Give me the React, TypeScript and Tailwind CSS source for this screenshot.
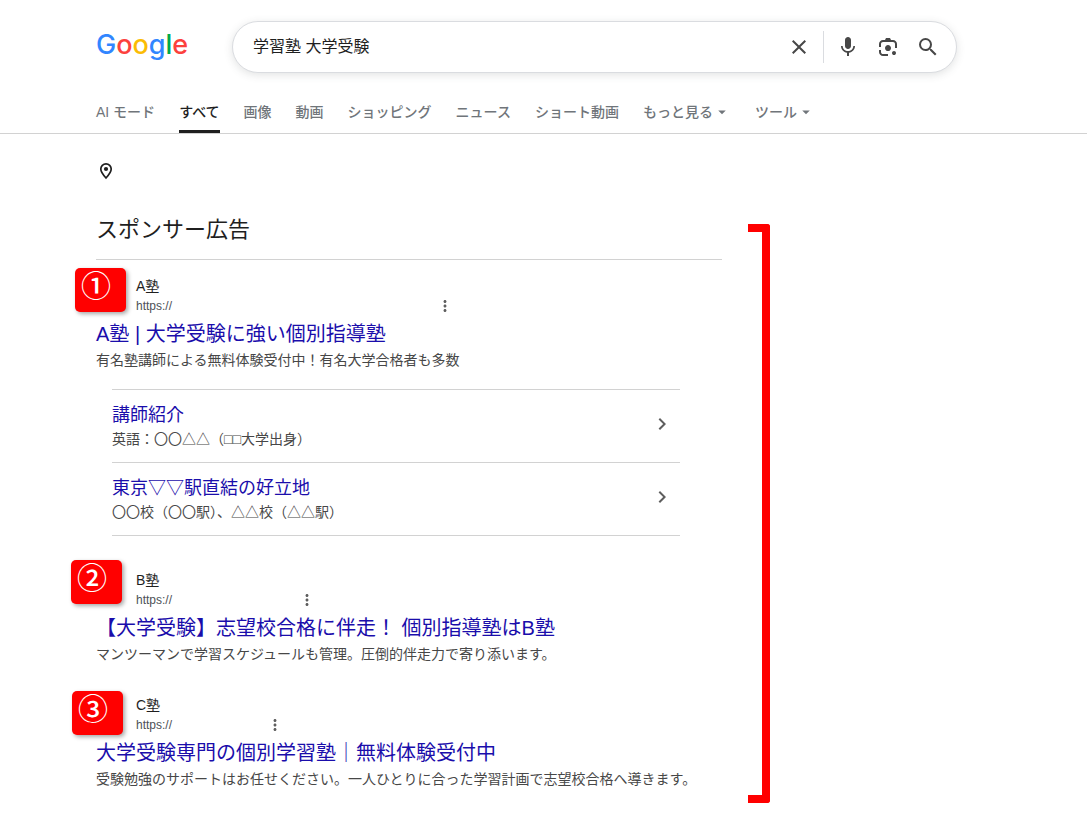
import React, { useState } from 'react';
import {
  MdArrowDropDown,
  MdChevronRight,
  MdClear,
  MdMic,
  MdMoreVert,
  MdSearch
} from 'react-icons/md';

interface SiteLink {
  title: string;
  text: string;
}

interface Ad {
  mark: string;
  markClass: string;
  name: string;
  urlClass: string;
  title: string;
  text: string;
  links?: SiteLink[];
}

const tabs = ['AI モード', 'すべて', '画像', '動画', 'ショッピング', 'ニュース', 'ショート動画'];

const ads: Ad[] = [
  {
    mark: '①',
    markClass: '-left-[21px] -top-2',
    name: 'A塾',
    urlClass: 'w-[300px]',
    title: 'A塾 | 大学受験に強い個別指導塾',
    text: '有名塾講師による無料体験受付中！有名大学合格者も多数',
    links: [
      { title: '講師紹介', text: '英語：〇〇△△（□□大学出身）' },
      { title: '東京▽▽駅直結の好立地', text: '〇〇校（〇〇駅）、△△校（△△駅）' }
    ]
  },
  {
    mark: '②',
    markClass: '-left-[25px] -top-[10px]',
    name: 'B塾',
    urlClass: 'w-[162px]',
    title: '【大学受験】志望校合格に伴走！ 個別指導塾はB塾',
    text: 'マンツーマンで学習スケジュールも管理。圧倒的伴走力で寄り添います。'
  },
  {
    mark: '③',
    markClass: '-left-[24px] -top-1',
    name: 'C塾',
    urlClass: 'w-[130px]',
    title: '大学受験専門の個別学習塾｜無料体験受付中',
    text: '受験勉強のサポートはお任せください。一人ひとりに合った学習計画で志望校合格へ導きます。'
  }
];

const LensIcon: React.FC = () => (
  <svg width="24" height="24" viewBox="0 -960 960 960" fill="currentColor" aria-hidden="true">
    <path d="M480-320q-50 0-85-35t-35-85q0-50 35-85t85-35q50 0 85 35t35 85q0 50-35 85t-85 35Zm240 160q-33 0-56.5-23.5T640-240q0-33 23.5-56.5T720-320q33 0 56.5 23.5T800-240q0 33-23.5 56.5T720-160Zm-440 40q-66 0-113-47t-47-113v-80h80v80q0 33 23.5 56.5T280-200h200v80H280Zm480-320v-160q0-33-23.5-56.5T680-680H280q-33 0-56.5 23.5T200-600v120h-80v-120q0-66 47-113t113-47h80l40-80h160l40 80h80q66 0 113 47t47 113v160h-80Z" />
  </svg>
);

const PinIcon: React.FC = () => (
  <svg width="20" height="20" viewBox="0 0 20 20" fill="none" aria-hidden="true">
    <path
      d="M10 17C6.6 13.4 4.8 10.8 4.8 8.1a5.2 5.2 0 0 1 10.4 0C15.2 10.800 13.4 13.400 10 17z"
      stroke="currentColor"
      strokeWidth="1.7"
    />
    <circle cx="10" cy="8" r="2.100" fill="currentColor" />
  </svg>
);

const Logo: React.FC = () => (
  <a href="#" className="w-[136px] shrink-0 pb-1 font-['Inter',sans-serif] text-[27px] leading-8 font-medium">
    <span className="text-[#3186ff]">G</span>
    <span className="text-[#fc413d]">o</span>
    <span className="text-[#fbbc04]">o</span>
    <span className="text-[#3186ff]">g</span>
    <span className="text-[#00a94b]">l</span>
    <span className="text-[#fc413d]">e</span>
  </a>
);

const SearchBar: React.FC = () => {
  const [query, setQuery] = useState('学習塾 大学受験');

  return (
    <form
      className="flex h-[52px] max-w-[725px] flex-1 items-center rounded-full border border-[#dadce0] bg-white pr-4 pl-5 text-[#474747] shadow-[0_2px_8px_rgba(60,64,67,0.15)]"
      onSubmit={(e) => e.preventDefault()}
    >
      <input
        aria-label="検索"
        value={query}
        onChange={(e) => setQuery(e.target.value)}
        className="min-w-0 flex-1 text-base text-[#1f1f1f] outline-none"
      />
      <button type="button" aria-label="クリア" className="mr-3" onClick={() => setQuery('')}>
        <MdClear size={24} className="block" />
      </button>
      <span className="mr-3 h-8 w-px bg-[#dadce0]" />
      <div className="flex gap-4">
        <button type="button" aria-label="音声で検索">
          <MdMic size={24} />
        </button>
        <button type="button" aria-label="画像で検索">
          <LensIcon />
        </button>
        <button type="submit" aria-label="Google 検索">
          <MdSearch size={24} />
        </button>
      </div>
    </form>
  );
};

const AdItem: React.FC<{ ad: Ad }> = ({ ad }) => (
  <article className="relative">
    <span
      className={`absolute h-11 w-[51px] rounded-[5px] bg-[#ff0000] pl-[6px] text-3xl leading-[38px] font-medium text-white shadow-[2px_2px_4px_rgba(0,0,0,0.35)] ${ad.markClass}`}
    >
      {ad.mark}
    </span>
    <div className="pl-10">
      <div className="text-sm leading-5 text-[#1f1f1f]">{ad.name}</div>
      <div className="flex h-5 items-center">
        <span className={`text-xs leading-5 text-[#4d5156] ${ad.urlClass}`}>https://</span>
        <button aria-label="この広告について" className="text-[#5e5e5e]">
          <MdMoreVert size={18} />
        </button>
      </div>
    </div>
    <h3 className="text-xl leading-9 text-[#1a0dab]">
      <a href="#">{ad.title}</a>
    </h3>
    <p className="text-sm leading-4 text-[#474747]">{ad.text}</p>
    {ad.links && (
      <ul className="mt-[21px] mr-[42px] mb-px ml-4 border-b border-[#d2d2d2]">
        {ad.links.map((link) => (
          <li key={link.title} className="flex h-[73px] items-center border-t border-[#d2d2d2] pr-[6px]">
            <div className="flex-1 pt-[2px]">
              <a href="#" className="block text-lg leading-6 text-[#1a0dab]">
                {link.title}
              </a>
              <p className="text-sm leading-6 text-[#474747]">{link.text}</p>
            </div>
            <MdChevronRight size={24} className="mb-1 text-[#5e5e5e]" />
          </li>
        ))}
      </ul>
    )}
  </article>
);

const App: React.FC = () => {
  return (
    <div
      lang="ja"
      className="min-h-screen bg-white font-['Liberation_Sans','Noto_Sans_CJK_JP',sans-serif] text-[#1f1f1f]"
    >
      <header className="border-b border-[#d2d2d2] pt-[21px] pl-24">
        <div className="flex items-center pr-6">
          <Logo />
          <SearchBar />
        </div>
        <nav className="mt-5 flex h-10 gap-6 text-sm font-medium whitespace-nowrap text-[#70757a]">
          {tabs.map((tab) => (
            <a
              key={tab}
              href="#"
              className={`flex h-full items-center border-b-3 ${
                tab === 'すべて' ? 'border-[#1f1f1f] text-[#1f1f1f]' : 'border-transparent'
              }`}
            >
              {tab}
            </a>
          ))}
          <button className="flex items-center border-b-3 border-transparent">
            もっと見る
            <MdArrowDropDown size={18} />
          </button>
          <button className="flex items-center border-b-3 border-transparent">
            ツール
            <MdArrowDropDown size={18} />
          </button>
        </nav>
      </header>

      <div className="pt-[27px] pr-6 pl-24">
        <PinIcon />
      </div>
      <main className="mt-[43px] flex pr-6 pl-24">
        <div className="max-w-[626px] flex-1">
          <h2 className="-mt-[10px] border-b border-[#d2d2d2] pb-[13px] text-[22px] leading-8">スポンサー広告</h2>
          <div className="mt-4 flex flex-col gap-[33px]">
            {ads.map((ad) => (
              <AdItem key={ad.mark} ad={ad} />
            ))}
          </div>
        </div>
        {/* bracket spanning the whole sponsored block */}
        <div className="ml-[26px] h-[579px] w-[22px] shrink-0 rounded-r-[3px] border-y-8 border-r-8 border-[#ff0000]" />
      </main>
    </div>
  );
};

export default App;
